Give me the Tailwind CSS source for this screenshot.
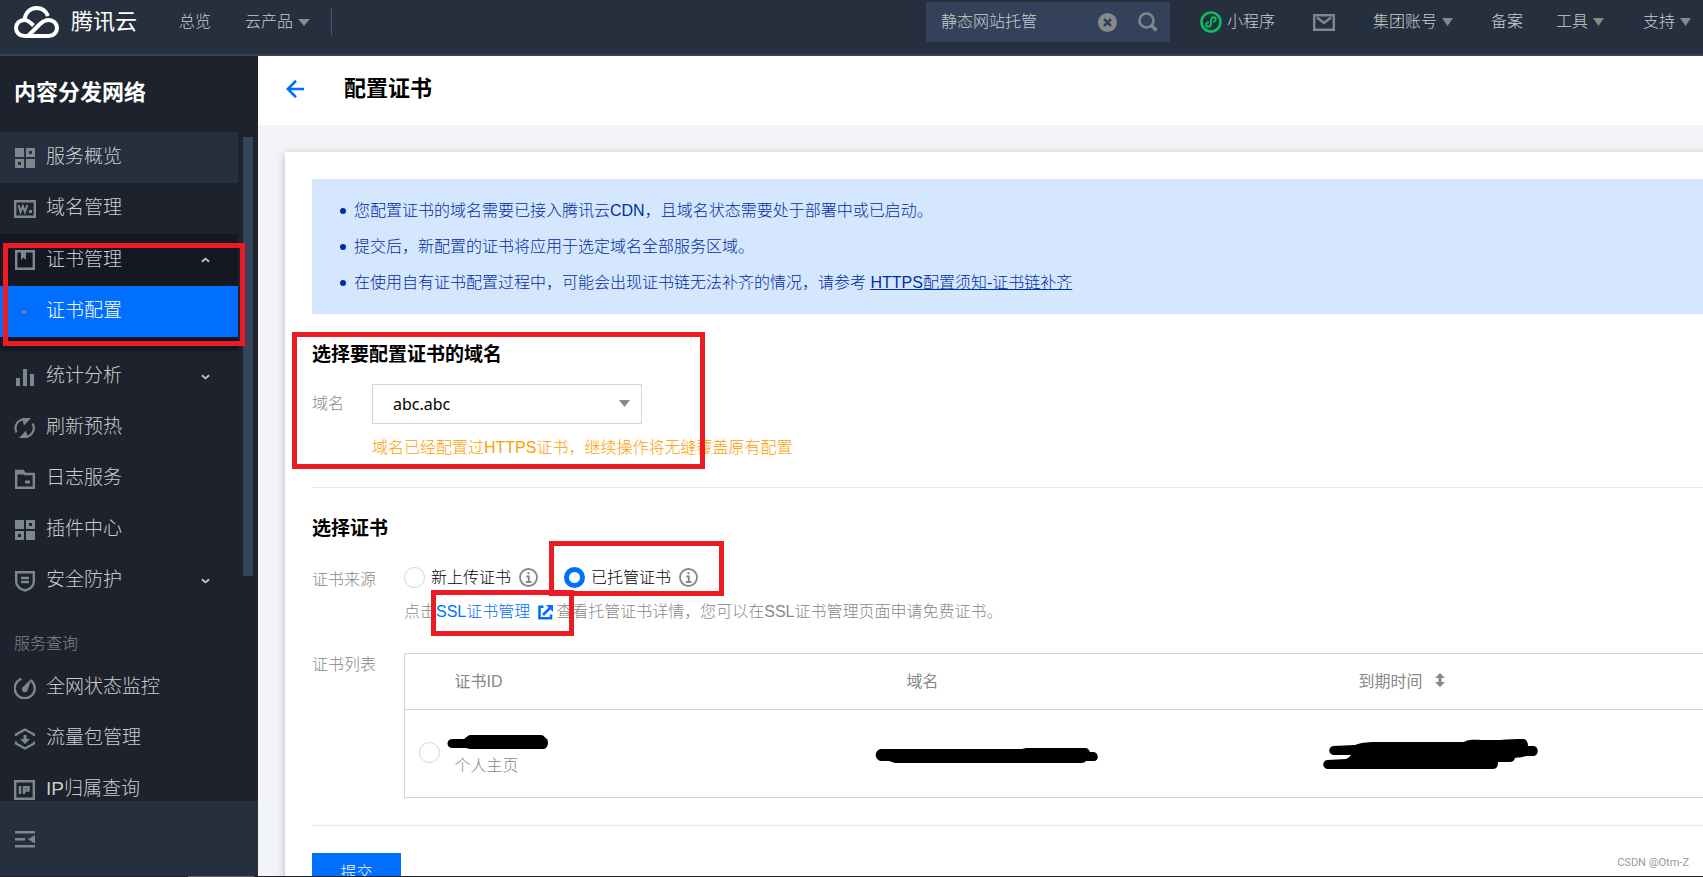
<!DOCTYPE html>
<html lang="zh-CN">
<head>
<meta charset="utf-8">
<title>配置证书 - 内容分发网络 - 腾讯云</title>
<script src="https://cdn.jsdelivr.net/npm/@tailwindcss/browser@4"></script>
</head>
<body class="bg-[#f3f4f8] font-['Liberation_Sans','Noto_Sans_CJK_SC',sans-serif] text-base font-light text-black">
<div class="relative flex h-screen flex-col overflow-hidden">

  <header class="flex h-14 shrink-0 items-center border-b-2 border-[#36435a] bg-[#262f3e] pr-3 pb-[10px] pl-[14px] whitespace-nowrap text-[#c9cdcf]">
    <a href="#" class="flex items-center gap-3 text-[22px] leading-8 font-normal text-white">
      <svg class="h-8 w-[45px]" viewBox="0 0 45 32" fill="none" stroke="#fff" stroke-width="4" stroke-linejoin="round">
        <path d="M19.5 19.5C16.5 16.5 14 14 10.5 14C5.500 14 2 17.500 2 22C2 26.500 5.500 30 10.500 30H34.500C39.500 30 43 26.500 43 22C43 17.500 39.500 14 34.500 14C31 14 28.500 15.700 26 18L14.500 29.500"/>
        <path d="M10.500 14C11 7 16 2 22.500 2C28 2 32 5 34 10"/>
      </svg>
      <span>腾讯云</span>
    </a>
    <nav class="ml-[42px] flex items-center gap-[34px]">
      <a href="#">总览</a>
      <button type="button" class="flex items-center gap-[5px]">云产品
        <svg class="h-[7px] w-3" viewBox="0 0 12 7"><path d="M0 0H12L6 7Z" fill="#888"/></svg>
      </button>
    </nav>
    <div class="ml-[21px] h-7 w-px bg-[#4b586c]"></div>

    <form class="ml-auto flex h-10 w-[244px] items-center bg-[#33425a] pr-3 pl-[15px]">
      <input type="text" aria-label="搜索" value="静态网站托管" class="min-w-0 flex-1 bg-transparent font-light outline-none">
      <button type="button" aria-label="清除">
        <svg class="size-[19px]" viewBox="0 0 19 19"><circle cx="9.500" cy="9.500" r="9.500" fill="#888"/><path d="M6 6L13 13M13 6L6 13" stroke="#33425a" stroke-width="2.500"/></svg>
      </button>
      <button type="submit" aria-label="查找" class="ml-[21px]">
        <svg class="size-5" viewBox="0 0 20 20" fill="none" stroke="#7c878e" stroke-width="2.600"><circle cx="8.500" cy="8.500" r="7"/><path d="M13.500 13.500L18.500 18.500" stroke-width="3.500"/></svg>
      </button>
    </form>
    <a href="#" class="ml-[30px] flex items-center gap-[5px]">
      <svg class="size-[22px]" viewBox="0 0 22 22" fill="none" stroke="#07c160" stroke-linecap="round"><circle cx="11" cy="11" r="9.500" stroke-width="2.600"/><path d="M8.200 11.200C5.500 12 5.500 15.800 8.300 15.800C10.500 15.800 11 14.200 11 12.500V9.500C11 7.800 11.500 6.200 13.700 6.200C16.500 6.200 16.500 10 13.800 10.800" stroke-width="1.900"/></svg>
      小程序
    </a>
    <a href="#" aria-label="消息" class="ml-[38px]">
      <svg class="h-[17px] w-[22px]" viewBox="0 0 22 17" fill="none" stroke="#7c878e" stroke-width="2.400"><path d="M1.200 1.200H20.800V15.800H1.200Z"/><path d="M4 3.500L11 9L18 3.500"/></svg>
    </a>
    <button type="button" class="ml-[38px] flex items-center gap-[5px]">集团账号
      <svg class="h-2 w-[11px]" viewBox="0 0 11 8"><path d="M0 0H11L5.500 8Z" fill="#888"/></svg>
    </button>
    <a href="#" class="ml-[38px]">备案</a>
    <button type="button" class="ml-[33px] flex items-center gap-[5px]">工具
      <svg class="h-2 w-[11px]" viewBox="0 0 11 8"><path d="M0 0H11L5.500 8Z" fill="#888"/></svg>
    </button>
    <button type="button" class="ml-[39px] flex items-center gap-[5px]">支持
      <svg class="h-2 w-[11px]" viewBox="0 0 11 8"><path d="M0 0H11L5.500 8Z" fill="#888"/></svg>
    </button>
  </header>

  <div class="flex min-h-0 flex-1">
    <aside class="flex w-[258px] shrink-0 flex-col bg-[#1e222d] text-[19px] text-[#c9cdcf]">
      <h2 class="flex h-[76px] shrink-0 items-center pb-1 pl-[14px] text-[22px] font-bold text-white">内容分发网络</h2>
      <div class="flex min-h-0 flex-1 overflow-hidden">
        <nav class="w-[238px] shrink-0">
          <a href="#" class="flex h-[51px] items-center gap-[10px] bg-[#262f3e] pl-[14px]">
            <svg class="size-[22px]" viewBox="0 0 22 22" fill="#7c878e"><path d="M1 1H10V10H1Z"/><path fill-rule="evenodd" d="M12 1H21V10H12ZM15 4V7H18V4ZM1 12H10V21H1ZM4 15V18H7V15Z"/><path d="M12 12H21V21H12Z"/></svg>
            服务概览
          </a>
          <a href="#" class="flex h-[51px] items-center gap-[10px] pl-[14px]">
            <svg class="size-[22px]" viewBox="0 0 22 22" fill="none" stroke="#7c878e" stroke-width="2.400"><path d="M1.200 3.200H20.800V18.800H1.200Z"/><path d="M4.500 7L6.500 14L8.800 8L11 14L13.300 7" stroke-width="2"/><path d="M15 13.500H18" stroke-width="3"/></svg>
            域名管理
          </a>
          <div class="bg-[#151822] pb-[14px]">
            <button type="button" class="flex h-[52px] w-full items-center gap-[10px] pr-7 pl-[14px] text-left">
              <svg class="size-[22px]" viewBox="0 0 22 22"><path d="M2.200 2.200H19.800V19.800H2.200Z" fill="none" stroke="#7c878e" stroke-width="2.400"/><path d="M7 3H12V11L9.500 8.500L7 11Z" fill="#7c878e"/></svg>
              <span class="flex-1">证书管理</span>
              <svg class="h-[6px] w-[9px]" viewBox="0 0 10 6" fill="none" stroke="#c1c6c8" stroke-width="2"><path d="M1 5L5 1.500L9 5"/></svg>
            </button>
            <a href="#" class="flex h-[51px] items-center bg-[#006eff] pl-[22px] text-white">
              <span class="mr-5 size-1 rounded-full bg-[#7c878e]"></span>证书配置
            </a>
          </div>
          <button type="button" class="flex h-[51px] w-full items-center gap-[10px] pr-7 pl-[14px] text-left">
            <svg class="size-[22px]" viewBox="0 0 22 22" fill="#7c878e"><path d="M2 12H6V20H2ZM9 3H13V20H9ZM16 8H20V20H16Z"/></svg>
            <span class="flex-1">统计分析</span>
            <svg class="h-[6px] w-[9px]" viewBox="0 0 10 6" fill="none" stroke="#c1c6c8" stroke-width="2"><path d="M1 1L5 4.500L9 1"/></svg>
          </button>
          <a href="#" class="flex h-[51px] items-center gap-[10px] pl-[14px]">
            <svg class="size-[22px]" viewBox="0 0 22 22"><path d="M2.500 15.500C-0.500 9 3.500 2.500 11 2M18.500 6.500C22 12.500 18 19.500 11 20" fill="none" stroke="#7c878e" stroke-width="2.200"/><path d="M8 1H17L10 8.500ZM14 21H5L12 13.500Z" fill="#7c878e"/></svg>
            刷新预热
          </a>
          <a href="#" class="flex h-[51px] items-center gap-[10px] pl-[14px]">
            <svg class="size-[22px]" viewBox="0 0 22 22" fill="none" stroke="#7c878e" stroke-width="2.400"><path d="M2.200 19.800V3H9L11 6H19.800V19.800Z"/><path d="M2 4H9.500L11 6.500H2Z" fill="#7c878e" stroke="none"/><path d="M11 14H16" stroke-width="3"/></svg>
            日志服务
          </a>
          <a href="#" class="flex h-[51px] items-center gap-[10px] pl-[14px]">
            <svg class="size-[22px]" viewBox="0 0 22 22" fill="#7c878e"><path d="M1 1H10V10H1Z"/><path fill-rule="evenodd" d="M12 1H21V10H12ZM15 4V7H18V4ZM1 12H10V21H1ZM4 15V18H7V15Z"/><path d="M12 12H21V21H12Z"/></svg>
            插件中心
          </a>
          <button type="button" class="flex h-[51px] w-full items-center gap-[10px] pr-7 pl-[14px] text-left">
            <svg class="size-[22px]" viewBox="0 0 22 22" fill="none" stroke="#7c878e" stroke-width="2.400"><path d="M2.200 2.200H19.800V12C19.800 16 16 19.500 11 20.500C6 19.500 2.200 16 2.200 12Z"/><path d="M7 8H15M7 12H15"/></svg>
            <span class="flex-1">安全防护</span>
            <svg class="h-[6px] w-[9px]" viewBox="0 0 10 6" fill="none" stroke="#c1c6c8" stroke-width="2"><path d="M1 1L5 4.500L9 1"/></svg>
          </button>
          <h3 class="flex h-14 items-end pb-[6px] pl-[14px] text-base text-[#7c878e]">服务查询</h3>
          <a href="#" class="flex h-[51px] items-center gap-[10px] pl-[14px]">
            <svg class="size-[22px]" viewBox="0 0 22 22"><path d="M7.500 1.800A10 10 0 1 0 17 3.500" fill="none" stroke="#7c878e" stroke-width="2.400"/><path d="M17.500 1.500L13.800 12.500A3 3 0 1 1 9.500 9.500Z" fill="#7c878e"/></svg>
            全网状态监控
          </a>
          <a href="#" class="flex h-[51px] items-center gap-[10px] pl-[14px]">
            <svg class="size-[22px]" viewBox="0 0 22 22"><path d="M2 8V6.500L11 1.500L20 6.500V8M2 13.500V15.500L11 20.500L20 15.500V13.500" fill="none" stroke="#7c878e" stroke-width="2.200"/><path d="M9.500 7H12.500V11H16L11 16L6 11H9.500Z" fill="#7c878e"/></svg>
            流量包管理
          </a>
          <a href="#" class="flex h-[51px] items-center gap-[10px] pl-[14px]">
            <svg class="size-[22px]" viewBox="0 0 22 22" fill="none" stroke="#7c878e" stroke-width="2.400"><path d="M1.200 2.200H19.800V19.800H1.200Z"/><path d="M6 7V15M10 15V8.200H14.500V11.500H10" stroke-width="2.500"/></svg>
            IP归属查询
          </a>
        </nav>
        <div class="mt-[5px] ml-[5px] h-[439px] w-[10px] bg-[#36435c]"></div>
      </div>
      <div class="flex h-[75px] shrink-0 items-center bg-[#262f3e] pl-[14px]">
        <button type="button" aria-label="收起菜单">
          <svg class="size-[22px]" viewBox="0 0 22 22" fill="#7c878e"><path d="M1 3H21V5.500H1ZM1 10H11V12.500H1ZM1 17H21V19.500H1ZM21 7V15.500L14 11.200Z"/></svg>
        </button>
      </div>
    </aside>

    <main class="flex min-w-0 flex-1 flex-col overflow-hidden">
      <div class="flex h-[69px] shrink-0 items-center bg-white pb-1 pl-7">
        <a href="#" aria-label="返回">
          <svg class="size-[18px]" viewBox="0 0 18 18" fill="none" stroke="#006eff" stroke-width="2.600"><path d="M10 0.800L1.800 9L10 17.200M2 9H18"/></svg>
        </a>
        <h1 class="ml-10 text-[22px] leading-8 font-bold">配置证书</h1>
      </div>

      <section class="mt-[27px] ml-[27px] min-w-[1540px] flex-1 bg-white px-[27px] pt-[27px] shadow-[0_2px_8px_rgba(54,58,80,0.32)]">
        <ul class="flex h-[135px] flex-col gap-3 bg-[#d5e7ff] pt-5 pl-7 leading-6 text-[#002da0]">
          <li class="flex items-center gap-2"><span class="size-[6px] rounded-full bg-[#002da0]"></span>您配置证书的域名需要已接入腾讯云CDN，且域名状态需要处于部署中或已启动。</li>
          <li class="flex items-center gap-2"><span class="size-[6px] rounded-full bg-[#002da0]"></span>提交后，新配置的证书将应用于选定域名全部服务区域。</li>
          <li class="flex items-center gap-2"><span class="size-[6px] rounded-full bg-[#002da0]"></span><span>在使用自有证书配置过程中，可能会出现证书链无法补齐的情况，请参考 <a href="#" class="underline">HTTPS配置须知-证书链补齐</a></span></li>
        </ul>

        <form>
          <h2 class="mt-[27px] text-[19px] leading-7 font-bold">选择要配置证书的域名</h2>
          <div class="mt-[15px] flex">
            <label for="domain" class="w-[60px] leading-10 text-[#888]">域名</label>
            <div>
              <div class="relative w-[270px]">
                <select id="domain" class="h-10 w-full appearance-none border border-[#cfd5de] bg-white pl-5 font-['Noto_Sans',sans-serif] text-base font-normal">
                  <option>abc.abc</option>
                </select>
                <svg class="pointer-events-none absolute top-4 right-3 h-[7px] w-[11px]" viewBox="0 0 11 7"><path d="M0 0H11L5.500 7Z" fill="#888"/></svg>
              </div>
              <p class="mt-3 leading-6 text-[#ff9d00]">域名已经配置过HTTPS证书，继续操作将无缝覆盖原有配置</p>
            </div>
          </div>

          <hr class="mt-[27px] border-[#e7eaef]">

          <h2 class="mt-[27px] text-[19px] leading-7 font-bold">选择证书</h2>
          <div class="mt-[23px] flex">
            <span class="w-[92px] leading-7 text-[#888]">证书来源</span>
            <div>
              <div class="flex h-[23px] items-center">
                <label class="flex items-center gap-[6px]"><input type="radio" name="source" class="size-[21px] appearance-none rounded-full border border-[#cfd5de] checked:border-[5px] checked:border-[#006eff]">新上传证书</label>
                <svg class="ml-2 size-[19px]" viewBox="0 0 19 19" fill="none" stroke="#888"><circle cx="9.500" cy="9.500" r="8.500" stroke-width="1.800"/><path d="M9.500 4V6.300M7.300 8.500H9.800V14M6.800 14H12.500" stroke-width="1.900"/></svg>
                <label class="ml-[26px] flex items-center gap-[6px]"><input type="radio" name="source" checked class="size-[21px] appearance-none rounded-full border border-[#cfd5de] checked:border-[5px] checked:border-[#006eff]">已托管证书</label>
                <svg class="ml-2 size-[19px]" viewBox="0 0 19 19" fill="none" stroke="#888"><circle cx="9.500" cy="9.500" r="8.500" stroke-width="1.800"/><path d="M9.500 4V6.300M7.300 8.500H9.800V14M6.800 14H12.500" stroke-width="1.900"/></svg>
              </div>
              <p class="mt-[11px] flex items-center leading-6 text-[#888]">点击<a href="#" class="mr-[3px] flex items-center gap-2 text-[#006eff]">SSL证书管理
                <svg class="size-[15px]" viewBox="0 0 15 15" fill="none" stroke="#006eff" stroke-width="2.600"><path d="M5.500 1.800H1.500V13.300H13V9.500"/><path d="M5 10L12 3"/><path d="M8 0H15V7Z" fill="#006eff" stroke="none"/></svg></a>查看托管证书详情，您可以在SSL证书管理页面申请免费证书。</p>
            </div>
          </div>

          <div class="mt-[29px] flex">
            <span class="w-[92px] shrink-0 leading-6 text-[#888]">证书列表</span>
            <table class="h-[145px] flex-1 table-fixed border-collapse border border-[#cfd5de] text-left text-[#888]">
              <colgroup><col class="w-[50px]"><col class="w-[452px]"><col class="w-[452px]"><col></colgroup>
              <thead>
                <tr class="h-14 border-b border-[#cfd5de]">
                  <th></th>
                  <th class="font-normal">证书ID</th>
                  <th class="font-normal">域名</th>
                  <th class="font-normal"><button type="button" class="flex items-start gap-3">到期时间
                    <svg class="mt-[3px] h-[14px] w-[10px]" viewBox="0 0 10 14" fill="#888"><path d="M5 0L10 5H6.500V9H10L5 14L0 9H3.500V5H0Z"/></svg></button></th>
                </tr>
              </thead>
              <tbody>
                <tr>
                  <td class="pb-[2px] pl-[14px]"><input type="radio" name="cert" aria-label="个人主页" class="block size-[21px] appearance-none rounded-full border border-[#cfd5de]"></td>
                  <td class="pt-6">个人主页</td>
                  <td></td>
                  <td></td>
                </tr>
              </tbody>
            </table>
          </div>

          <hr class="mt-[27px] border-[#e7eaef]">
          <button type="button" class="mt-[27px] h-10 w-[89px] bg-[#006eff] text-white">提交</button>
        </form>
      </section>
    </main>
  </div>

  <div class="flex h-px shrink-0 bg-[#222]"><span class="ml-[188px] w-[66px] bg-[#666]"></span></div>

  <!-- Annotation layer: marker strokes, frames and watermark -->
  <div class="pointer-events-none absolute inset-0">
    <svg class="absolute top-0 left-0 h-full w-full" fill="#000">
      <path d="M452 739H464C467 737 468 735 471 735H541C544 735 545 738 547 739C549 742 548 748 544 749H470L466 748H452C446 748 446 739 452 739Z"/>
      <path d="M881 749H1022L1026 748H1085C1088 748 1089 750 1090 752H1094C1099 753 1099 761 1094 761H1086C1085 762 1084 763 1081 763H895L889 761H881C874 760 874 750 881 749Z"/>
      <path d="M1333 746L1355 745C1363 742 1370 742 1378 742H1464C1469 739 1474 740 1482 740H1500C1508 739 1516 739 1524 739C1527 740 1528 743 1528 746H1534C1539 747 1539 755 1534 756H1526C1521 758 1518 757 1515 758C1514 761 1512 762 1510 762H1498C1498 766 1497 769 1493 769H1327C1322 768 1322 761 1327 760L1346 759C1349 758 1350 756 1351 755H1333C1328 754 1328 747 1333 746Z"/>
    </svg>
    <div class="absolute top-[243px] left-[3px] h-[103px] w-[242px] border-5 border-[#ed1c24]"></div>
    <div class="absolute top-[332px] left-[292px] h-[137px] w-[413px] border-5 border-[#ed1c24]"></div>
    <div class="absolute top-[541px] left-[549px] h-[55px] w-[175px] border-5 border-[#ed1c24]"></div>
    <div class="absolute top-[590px] left-[431px] h-[46px] w-[143px] border-5 border-[#ed1c24]"></div>
    <span class="absolute right-[14px] bottom-[6px] font-['Roboto',sans-serif] text-[11px] leading-4 font-normal text-[#999]">CSDN @Otm-Z</span>
  </div>
</div>
</body>
</html>
